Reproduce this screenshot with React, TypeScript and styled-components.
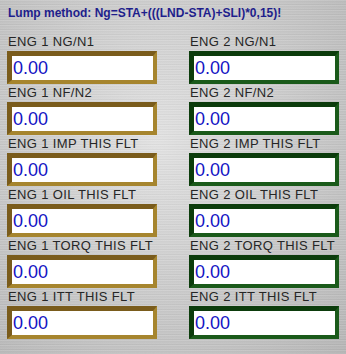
import { FC } from "react";
import styled, { createGlobalStyle } from "styled-components";

const GlobalStyle = createGlobalStyle`
  html, body {
    margin: 0;
    padding: 0;
  }
  body {
    font-family: "Liberation Sans", Arial, sans-serif;
  }
`;

const Panel = styled.div`
  width: 346px;
  height: 354px;
  box-sizing: border-box;
  padding: 5px 7px 0 7px;
  overflow: hidden;
  background-color: #c6c6c6;
  background-image:
    repeating-linear-gradient(
      180deg,
      rgba(255, 255, 255, 0.18) 0px,
      rgba(0, 0, 0, 0.04) 2px,
      rgba(255, 255, 255, 0.1) 3px,
      rgba(0, 0, 0, 0.06) 5px
    ),
    radial-gradient(ellipse at 45% 40%, #e4e4e4 0%, #cacaca 55%, #b6b6b6 100%);
`;

const Title = styled.div`
  font-size: 12px;
  font-weight: bold;
  color: #1e1e8c;
  line-height: 16px;
  padding-left: 1px;
  margin-bottom: 12px;
`;

const Grid = styled.div`
  display: grid;
  grid-template-columns: 150px 150px;
  column-gap: 32px;
`;

const Field = styled.div`
  display: flex;
  flex-direction: column;
`;

const Label = styled.div`
  font-size: 13px;
  letter-spacing: 0.35px;
  color: #262626;
  line-height: 18px;
  height: 18px;
  padding-left: 1px;
  white-space: nowrap;
`;

const ValueBox = styled.div<{ $engine: 1 | 2 }>`
  height: 33px;
  box-sizing: border-box;
  border-style: solid;
  border-width: 5px 4px 4px 5px;
  border-color: ${(p) =>
    p.$engine === 1
      ? "#7a5c1c #a6852e #a6852e #7a5c1c"
      : "#0c3c0c #1a5a1a #1a5a1a #0c3c0c"};
  background: #ffffff;
  display: flex;
  align-items: center;
  padding-left: 1px;
  font-size: 18px;
  color: #1414c4;
`;

const rows = [
  "NG/N1",
  "NF/N2",
  "IMP THIS FLT",
  "OIL THIS FLT",
  "TORQ THIS FLT",
  "ITT THIS FLT",
];

const App: FC = () => {
  return (
    <>
      <GlobalStyle />
      <Panel>
        <Title>Lump method: Ng=STA+(((LND-STA)+SLI)*0,15)!</Title>
        <Grid>
          {rows.map((r) =>
            ([1, 2] as const).map((eng) => (
              <Field key={`${eng}-${r}`}>
                <Label>
                  ENG {eng} {r}
                </Label>
                <ValueBox $engine={eng}>0.00</ValueBox>
              </Field>
            ))
          )}
        </Grid>
      </Panel>
    </>
  );
};

export default App;
